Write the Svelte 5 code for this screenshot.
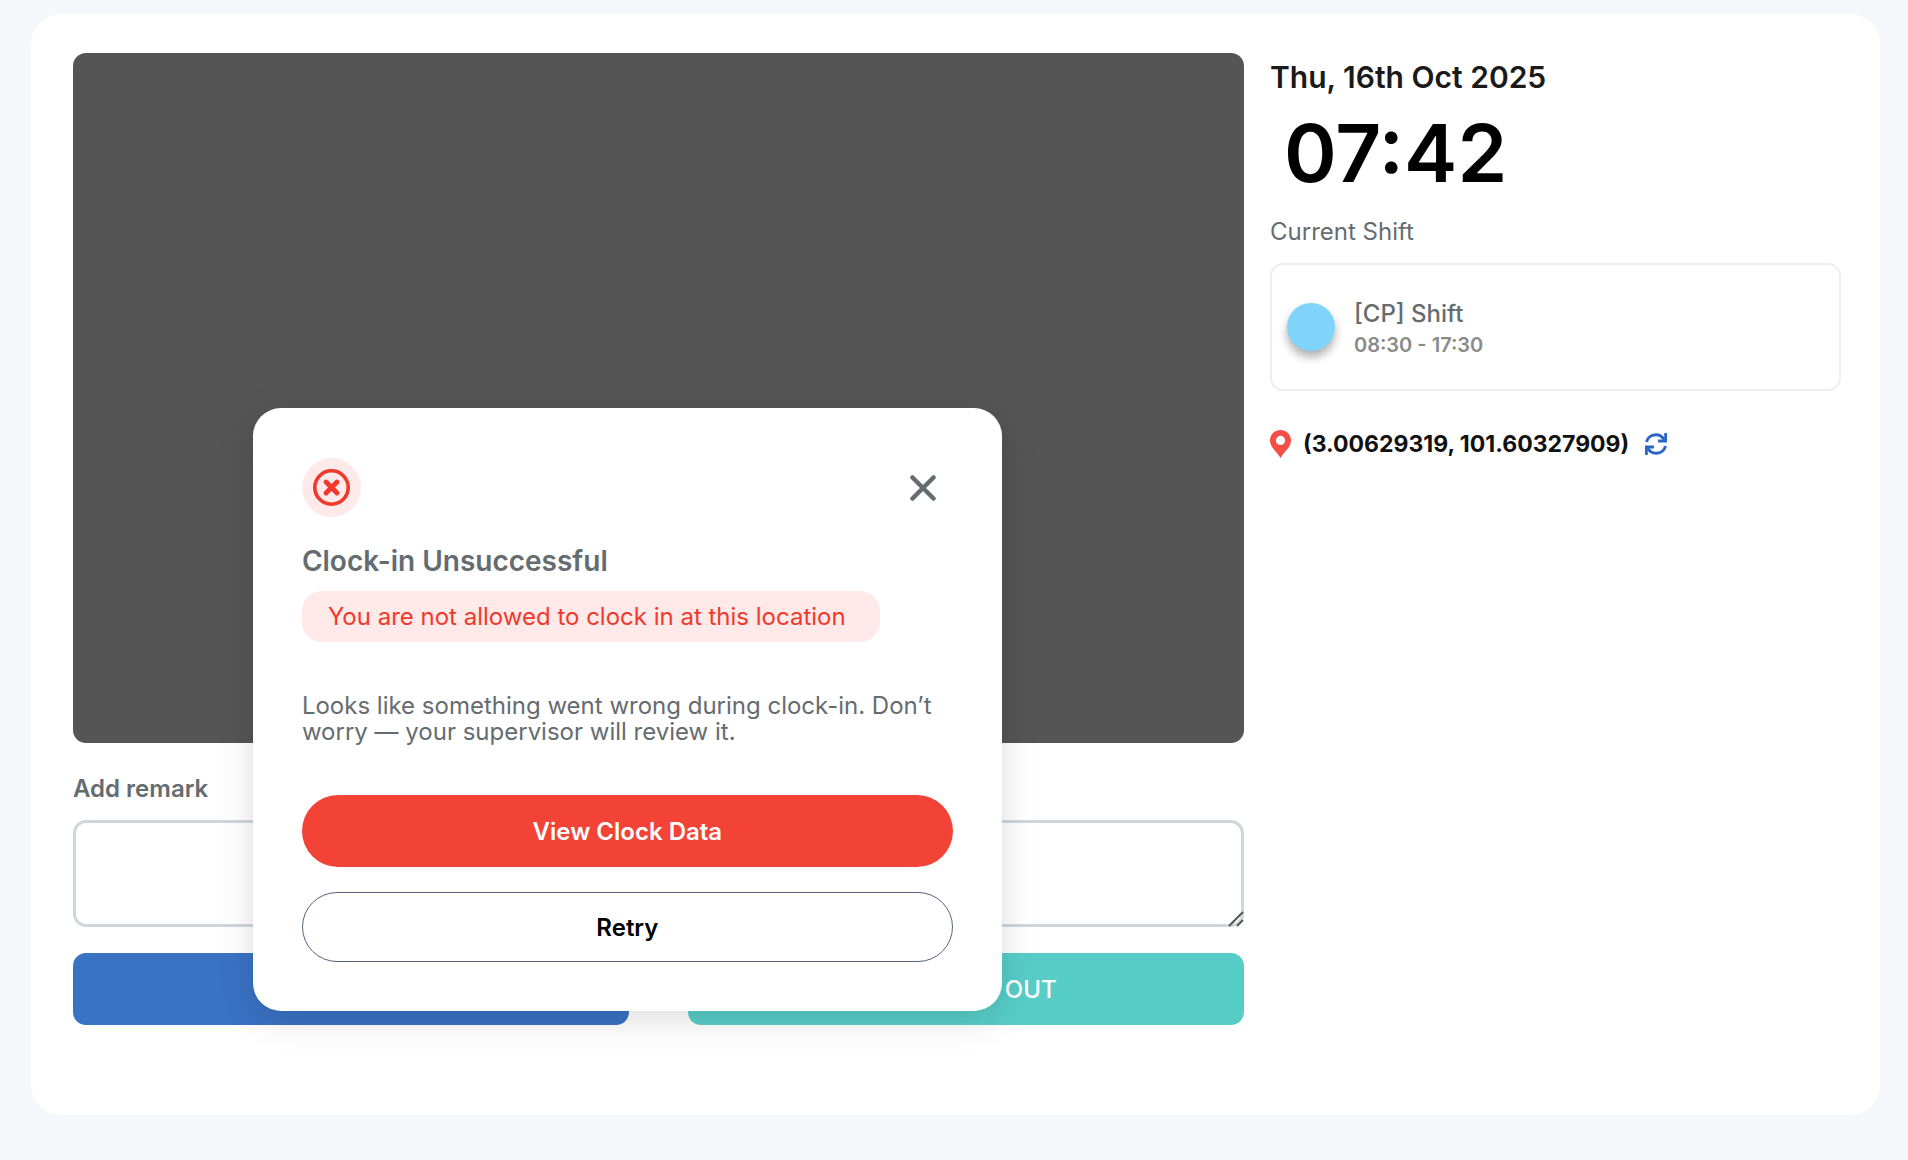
<script lang="ts">
	const date = 'Thu, 16th Oct 2025';
	const time = '07:42';
	const shift = { name: '[CP] Shift', hours: '08:30 - 17:30' };
	const coords = '(3.00629319, 101.60327909)';

	let remark = $state('');
	let modalOpen = $state(true);

	function closeModal() {
		modalOpen = false;
	}
</script>

<main class="page">
	<section class="panel">
		<div class="capture">
			<div class="camera"></div>

			<label class="label" for="remark">Add remark</label>
			<div class="remark-box">
				<textarea id="remark" class="remark" bind:value={remark}></textarea>
				<svg class="grip" viewBox="0 0 16 16" width="16" height="16" aria-hidden="true">
					<path d="M1 15L15 1M9 15L15 9" />
				</svg>
			</div>

			<div class="actions">
				<button class="clock-btn clock-in">
					<svg viewBox="0 0 24 24" width="24" height="24" aria-hidden="true">
						<path d="M14 4h6v16h-6M4 12h10M10 8l4 4-4 4" />
					</svg>
					CLOCK IN
				</button>
				<button class="clock-btn clock-out">
					<svg viewBox="0 0 24 24" width="24" height="24" aria-hidden="true">
						<path d="M10 4H4v16h6M10 12h10M16 8l4 4-4 4" />
					</svg>
					CLOCK OUT
				</button>
			</div>
		</div>

		<aside class="info">
			<h1 class="date">{date}</h1>
			<time class="time">{time}</time>
			<h2 class="caption">Current Shift</h2>

			<div class="shift">
				<span class="dot"></span>
				<div>
					<div class="shift-name">{shift.name}</div>
					<div class="shift-hours">{shift.hours}</div>
				</div>
			</div>

			<div class="location">
				<svg class="pin" viewBox="0 0 21 28" width="21" height="28" aria-hidden="true">
					<path
						fill-rule="evenodd"
						d="M10.500 0C4.700 0 0 4.600 0 10.400 0 17.500 7 21.500 10.500 28 14 21.500 21 17.500 21 10.400 21 4.600 16.300 0 10.500 0Zm0 5.800a4.600 4.600 0 1 1 0 9.200 4.600 4.600 0 0 1 0-9.200Z"
					/>
				</svg>
				<span>{coords}</span>
				<button class="refresh" aria-label="Refresh location">
					<svg viewBox="0 0 22 22" width="22" height="22" aria-hidden="true">
						<path d="M1.500 9C2.500 4.500 6.500 1.800 11 1.800c3.800 0 6.500 2 8.300 5" />
						<path d="M20.700 0v8H13" />
						<path d="M20.500 13c-1 4.500-5 7.200-9.500 7.200-3.800 0-6.500-2-8.300-5" />
						<path d="M1.300 22v-8H9" />
					</svg>
				</button>
			</div>
		</aside>

		{#if modalOpen}
			<div class="modal" role="dialog" aria-labelledby="modal-title">
				<div class="modal-head">
					<span class="badge">
						<svg viewBox="0 0 37 37" width="37" height="37" aria-hidden="true">
							<circle cx="18.500" cy="18.500" r="16.700" stroke-width="3.600" />
							<path d="M13 13l11 11M24 13L13 24" stroke-width="4.800" />
						</svg>
					</span>
					<button class="close" aria-label="Close" onclick={closeModal}>
						<svg viewBox="0 0 26 26" width="26" height="26" aria-hidden="true">
							<path d="M2.500 2.500l21 21M23.500 2.500l-21 21" />
						</svg>
					</button>
				</div>
				<h2 class="title" id="modal-title">Clock-in Unsuccessful</h2>
				<p class="reason">You are not allowed to clock in at this location</p>
				<p class="message">
					Looks like something went wrong during clock-in. Don’t worry — your supervisor will review it.
				</p>
				<button class="pill primary">View Clock Data</button>
				<button class="pill secondary" onclick={closeModal}>Retry</button>
			</div>
		{/if}
	</section>
</main>

<style>
	:global(body) {
		background: #f5f7fb;
	}

	.page {
		box-sizing: border-box;
		min-height: 100vh;
		padding: 14px 28px 40px 31px;
		font-family: Inter, 'Liberation Sans', sans-serif;
		font-size: 24px;
		color: #646c70;
	}

	.page * {
		box-sizing: border-box;
	}

	button,
	textarea {
		font: inherit;
	}

	button {
		padding: 0;
		border: none;
		background: none;
		cursor: pointer;
	}

	h1,
	h2,
	p {
		margin: 0;
	}

	.panel {
		position: relative;
		display: grid;
		grid-template-columns: 1171fr 571fr;
		gap: 26px;
		padding: 39px 39px 90px 42px;
		border-radius: 30px;
		background: #fff;
	}

	.camera {
		aspect-ratio: 1171 / 690;
		border-radius: 13px;
		background: #555;
	}

	.label {
		display: block;
		margin: 30px 0 15px;
		line-height: 32px;
		font-weight: 600;
	}

	.remark-box {
		position: relative;
	}

	.remark {
		display: block;
		width: 100%;
		height: 107px;
		padding: 12px;
		border: 3px solid #d0d7dc;
		border-radius: 13px;
		background: #fff;
		resize: none;
	}

	.grip {
		position: absolute;
		right: 0;
		bottom: 0;
		fill: none;
		stroke: #555;
		stroke-width: 2;
	}

	.actions {
		display: grid;
		grid-template-columns: 1fr 1fr;
		gap: 59px;
		margin-top: 26px;
	}

	.clock-btn {
		display: flex;
		align-items: center;
		justify-content: center;
		gap: 16px;
		height: 72px;
		border-radius: 13px;
		color: #fff;
		font-weight: 500;
	}

	.clock-btn svg {
		fill: none;
		stroke: currentColor;
		stroke-width: 2;
	}

	.clock-in {
		background: #3a72c4;
	}

	.clock-out {
		background: #57cdc8;
	}

	.date {
		margin-top: 4px;
		font-size: 30px;
		line-height: 40px;
		font-weight: 600;
		color: #1a1a1a;
	}

	.time {
		display: block;
		margin-top: 8px;
		padding-left: 14px;
		font-size: 80px;
		line-height: 96px;
		font-weight: 600;
		color: #000;
	}

	.caption {
		margin: 15px 0 15px;
		font-size: 24px;
		line-height: 32px;
		font-weight: 400;
	}

	.shift {
		display: flex;
		align-items: center;
		gap: 19px;
		height: 128px;
		padding: 0 15px;
		border: 2px solid #eee;
		border-radius: 13px;
	}

	.dot {
		width: 48px;
		height: 48px;
		border-radius: 50%;
		background: #80d4fb;
		box-shadow: 0 6px 10px rgba(0, 0, 0, 0.32);
	}

	.shift-name {
		margin-top: 3px;
		line-height: 32px;
		font-weight: 500;
	}

	.shift-hours {
		font-size: 20px;
		line-height: 30px;
		font-weight: 600;
		color: #8a8a8a;
	}

	.location {
		display: flex;
		align-items: center;
		gap: 12px;
		margin-top: 37px;
		line-height: 32px;
		font-weight: 600;
		color: #111;
	}

	.location span {
		font-size: 23px;
		font-weight: 700;
	}

	.pin {
		fill: #f54e47;
	}

	.refresh {
		display: flex;
		margin-left: 4px;
	}

	.refresh svg {
		fill: none;
		stroke: #2b68c4;
		stroke-width: 3;
	}

	.modal {
		position: absolute;
		top: 394px;
		left: 12%;
		display: flex;
		flex-direction: column;
		width: 749px;
		padding: 50px 49px 49px;
		border-radius: 28px;
		background: #fff;
		box-shadow: 0 8px 36px rgba(0, 0, 0, 0.14);
	}

	.modal-head {
		display: flex;
		align-items: center;
		justify-content: space-between;
		padding-right: 17px;
	}

	.badge {
		display: flex;
		align-items: center;
		justify-content: center;
		width: 59px;
		height: 59px;
		border-radius: 50%;
		background: #ffe9e9;
	}

	.badge svg {
		fill: none;
		stroke: #f0392c;
		stroke-linecap: round;
	}

	.close {
		display: flex;
	}

	.close svg {
		fill: none;
		stroke: #646c70;
		stroke-width: 4.500;
		stroke-linecap: round;
	}

	.title {
		margin-top: 26px;
		font-size: 28px;
		line-height: 36px;
		font-weight: 600;
	}

	.reason {
		align-self: flex-start;
		margin-top: 12px;
		padding: 0 34px 0 26px;
		border-radius: 20px;
		background: #ffe9e9;
		line-height: 51px;
		color: #f0392c;
	}

	.message {
		margin: 51px 0 50px;
		line-height: 26px;
	}

	.pill {
		height: 72px;
		border-radius: 36px;
		font-weight: 600;
	}

	.primary {
		background: #f24336;
		color: #fff;
	}

	.secondary {
		height: 70px;
		margin-top: 25px;
		border: 1px solid #56617d;
		background: #fff;
		color: #000;
	}
</style>
